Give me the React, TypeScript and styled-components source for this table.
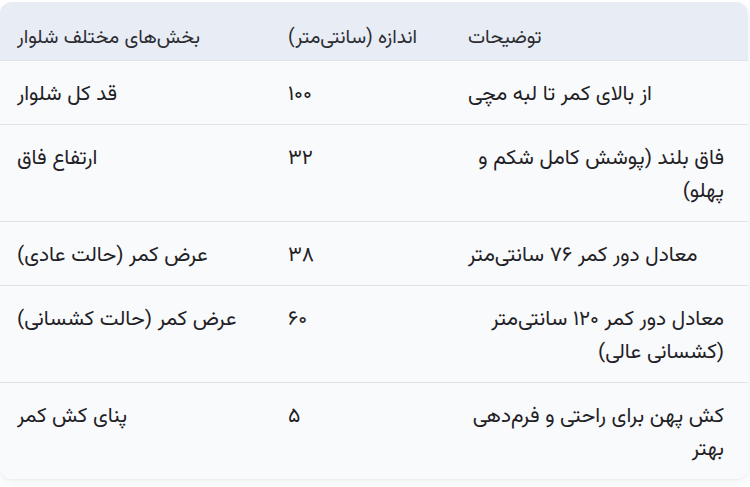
import React from 'react'
import styled, { createGlobalStyle } from 'styled-components'

const GlobalStyle = createGlobalStyle`
  html, body {
    margin: 0;
    padding: 0;
    background: #ffffff;
  }
  body {
    font-family: "Vazirmatn", "Noto Sans Arabic", "DejaVu Sans", sans-serif;
    color: #1f2125;
  }
`

const Page = styled.div`
  width: 750px;
  height: 487px;
  padding: 2px 2px 0 0;
  box-sizing: border-box;
  overflow: hidden;
`

const Card = styled.div`
  border-radius: 12px;
  overflow: hidden;
  background: #f9fafc;
  box-shadow: 0 4px 8px rgba(30, 40, 60, 0.06), 0 1px 2px rgba(30, 40, 60, 0.04);
`

const Table = styled.table`
  width: 100%;
  border-collapse: collapse;
  table-layout: fixed;
  direction: ltr;
`

const Col = styled.col<{ $w: number }>`
  width: ${p => p.$w}px;
`

const HeadRow = styled.tr`
  background: #e8ecf5;
  height: 58px;
`

const HeadCell = styled.th`
  text-align: left;
  font-weight: 400;
  font-size: 19.5px;
  line-height: 32px;
  color: #2b2d31;
  padding: 20px 24px 6px 17px;
  vertical-align: middle;
`

const Row = styled.tr`
  background: #f9fafc;
  border-top: 1.5px solid #dfe2e8;
`

const Cell = styled.td`
  text-align: left;
  font-size: 21px;
  line-height: 33px;
  padding: 17px 24px 13px 17px;
  vertical-align: top;
`

const Text = styled.span`
  display: inline-block;
  direction: rtl;
  text-align: right;
`

const rows = [
  ['قد کل شلوار', '۱۰۰', 'از بالای کمر تا لبه مچی'],
  ['ارتفاع فاق', '۳۲', 'فاق بلند (پوشش کامل شکم و پهلو)'],
  ['عرض کمر (حالت عادی)', '۳۸', 'معادل دور کمر ۷۶ سانتی‌متر'],
  ['عرض کمر (حالت کشسانی)', '۶۰', 'معادل دور کمر ۱۲۰ سانتی‌متر (کشسانی عالی)'],
  ['پنای کش کمر', '۵', 'کش پهن برای راحتی و فرم‌دهی بهتر'],
]

export default function App() {
  return (
    <Page>
      <GlobalStyle />
      <Card>
        <Table>
          <colgroup>
            <Col $w={271} />
            <Col $w={180} />
            <Col $w={297} />
          </colgroup>
          <thead>
            <HeadRow>
              <HeadCell><Text>بخش‌های مختلف شلوار</Text></HeadCell>
              <HeadCell><Text>اندازه (سانتی‌متر)</Text></HeadCell>
              <HeadCell><Text>توضیحات</Text></HeadCell>
            </HeadRow>
          </thead>
          <tbody>
            {rows.map((r, i) => (
              <Row key={i}>
                {r.map((c, j) => (
                  <Cell key={j}><Text>{c}</Text></Cell>
                ))}
              </Row>
            ))}
          </tbody>
        </Table>
      </Card>
    </Page>
  )
}
